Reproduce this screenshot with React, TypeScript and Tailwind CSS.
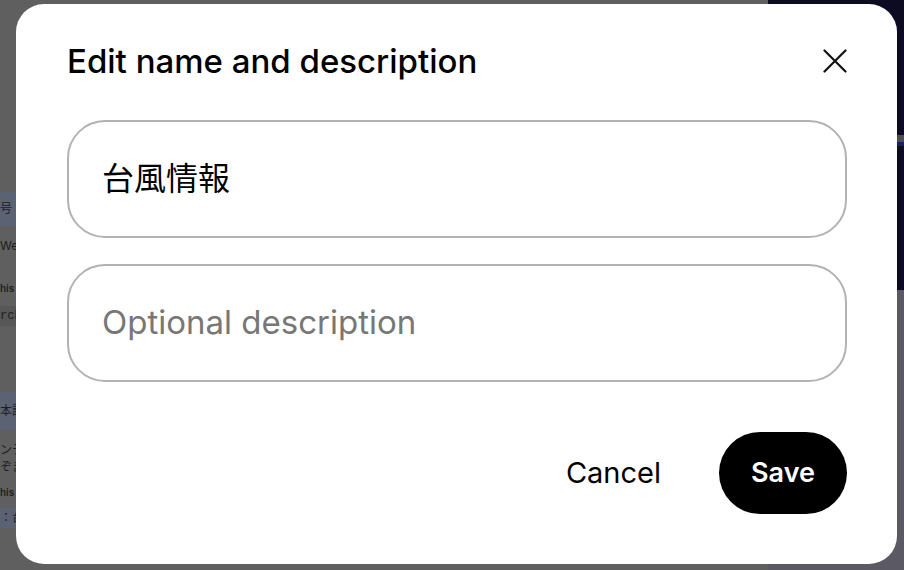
import React from "react";

export default function App() {
  return (
    <div className="relative w-[904px] h-[570px] overflow-hidden bg-[#5f5f5f]" style={{ fontFamily: "Inter, 'Noto Sans CJK JP', sans-serif" }}>
      {/* dimmed page underneath */}
      <div className="flex h-full w-full">
        <div className="flex-1 flex flex-col text-[12px] text-[#1e1e1e] leading-none">
          <div className="h-[192px]" />
          <div className="h-[34px] bg-[#5b6274] flex items-center pl-0">号：</div>
          <div className="h-[12px]" />
          <div className="h-[16px] flex items-center">Web</div>
          <div className="h-[28px]" />
          <div className="h-[12px] flex items-center text-[10px] font-semibold">his s</div>
          <div className="h-[12px]" />
          <div className="h-[20px] bg-[#575757] flex items-center" style={{ fontFamily: "'Liberation Mono', monospace" }}>rch</div>
          <div className="h-[66px]" />
          <div className="h-[38px] bg-[#5b6274] flex items-center">本語</div>
          <div className="h-[12px]" />
          <div className="h-[16px] flex items-center">ンテ</div>
          <div className="h-[18px] flex items-center">ぞま</div>
          <div className="h-[10px]" />
          <div className="h-[12px] flex items-center text-[10px] font-semibold">his s</div>
          <div className="h-[10px]" />
          <div className="h-[20px] bg-[#5b6274] flex items-center">：台</div>
        </div>
        <div className="w-[136px] flex flex-col">
          <div className="h-[135px] bg-[#0c0b22]" />
          <div className="h-[7px] bg-[#4d4d55]" />
          <div className="h-[4px] bg-[#1a1f6b]" />
          <div className="h-[4px] bg-[#101010]" />
          <div className="h-[140px] bg-[#0c0b22]" />
          <div className="flex-1 bg-[#5b5a64]" />
        </div>
      </div>

      {/* dialog */}
      <div className="absolute left-[16px] top-[4px] w-[881px] h-[560px] bg-white rounded-[28px] pl-[51px] pr-[50px] flex flex-col">
        <div className="flex items-center justify-between h-[116px]">
          <h2 className="text-[33px] font-medium text-black tracking-[0px]">Edit name and description</h2>
          <svg width="24" height="24" viewBox="0 0 24 24" className="mr-[0px] mt-[-2px]">
            <path d="M1.5 1.5 L22.5 22.5 M22.5 1.5 L1.5 22.5" stroke="#111" strokeWidth="2.2" strokeLinecap="round" />
          </svg>
        </div>
        <div className="h-[118px] rounded-[38px] border-2 border-[#b3b3b3] flex items-center px-[33px] text-[32px] text-black">
          台風情報
        </div>
        <div className="h-[26px]" />
        <div className="h-[118px] rounded-[38px] border-2 border-[#b3b3b3] flex items-center px-[33px] text-[33px] text-[#777]">
          Optional description
        </div>
        <div className="flex items-center justify-end mt-[50px] gap-[58px]">
          <span className="text-[29px] text-black">Cancel</span>
          <div className="w-[128px] h-[82px] rounded-full bg-black text-white text-[27px] font-semibold flex items-center justify-center">Save</div>
        </div>
      </div>
    </div>
  );
}
